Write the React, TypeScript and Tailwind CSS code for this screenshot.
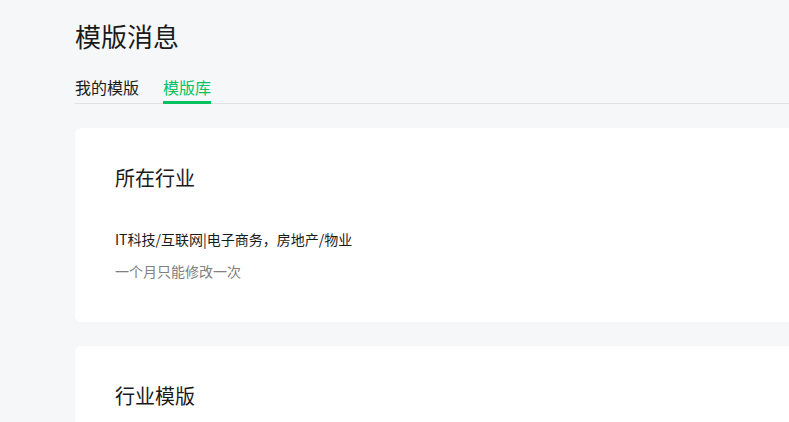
const tabs = [
  { label: '我的模版', active: false },
  { label: '模版库', active: true },
];

const App = () => {
  return (
    <div
      className="h-[422px] w-full overflow-hidden bg-[#f6f7f9] text-[#1a1a1a]"
      style={{ fontFamily: '"Noto Sans CJK SC", "Noto Sans", sans-serif' }}
    >
      <div className="w-[1000px] pl-[75px] pt-[18px]">
        {/* Header */}
        <h1 className="h-[36px] text-[26px] leading-[36px] font-normal">模版消息</h1>

        {/* Tabs */}
        <div className="mt-[21px] flex gap-[24px] border-b border-[#e0e1e3]">
          {tabs.map((tab) => (
            <div
              key={tab.label}
              className={
                tab.active
                  ? '-mb-px border-b-[3px] border-[#07c160] pb-[2px] text-[16px] leading-[24px] text-[#07c160]'
                  : '-mb-px border-b-[3px] border-transparent pb-[2px] text-[16px] leading-[24px]'
              }
            >
              {tab.label}
            </div>
          ))}
        </div>

        {/* Industry card */}
        <div className="mt-[24px] rounded-[6px] bg-white pl-[40px] pt-[36px] pb-[41px]">
          <h2 className="text-[20px] leading-[28px] font-normal">所在行业</h2>
          <p className="mt-[37px] text-[14px] leading-[20px]">IT科技/互联网|电子商务，房地产/物业</p>
          <p className="mt-[12px] text-[14px] leading-[20px] text-[#808080]">一个月只能修改一次</p>
        </div>

        {/* Templates card */}
        <div className="mt-[24px] h-[200px] rounded-[6px] bg-white pl-[40px] pt-[36px]">
          <h2 className="text-[20px] leading-[28px] font-normal">行业模版</h2>
        </div>
      </div>
    </div>
  );
};

export default App;
